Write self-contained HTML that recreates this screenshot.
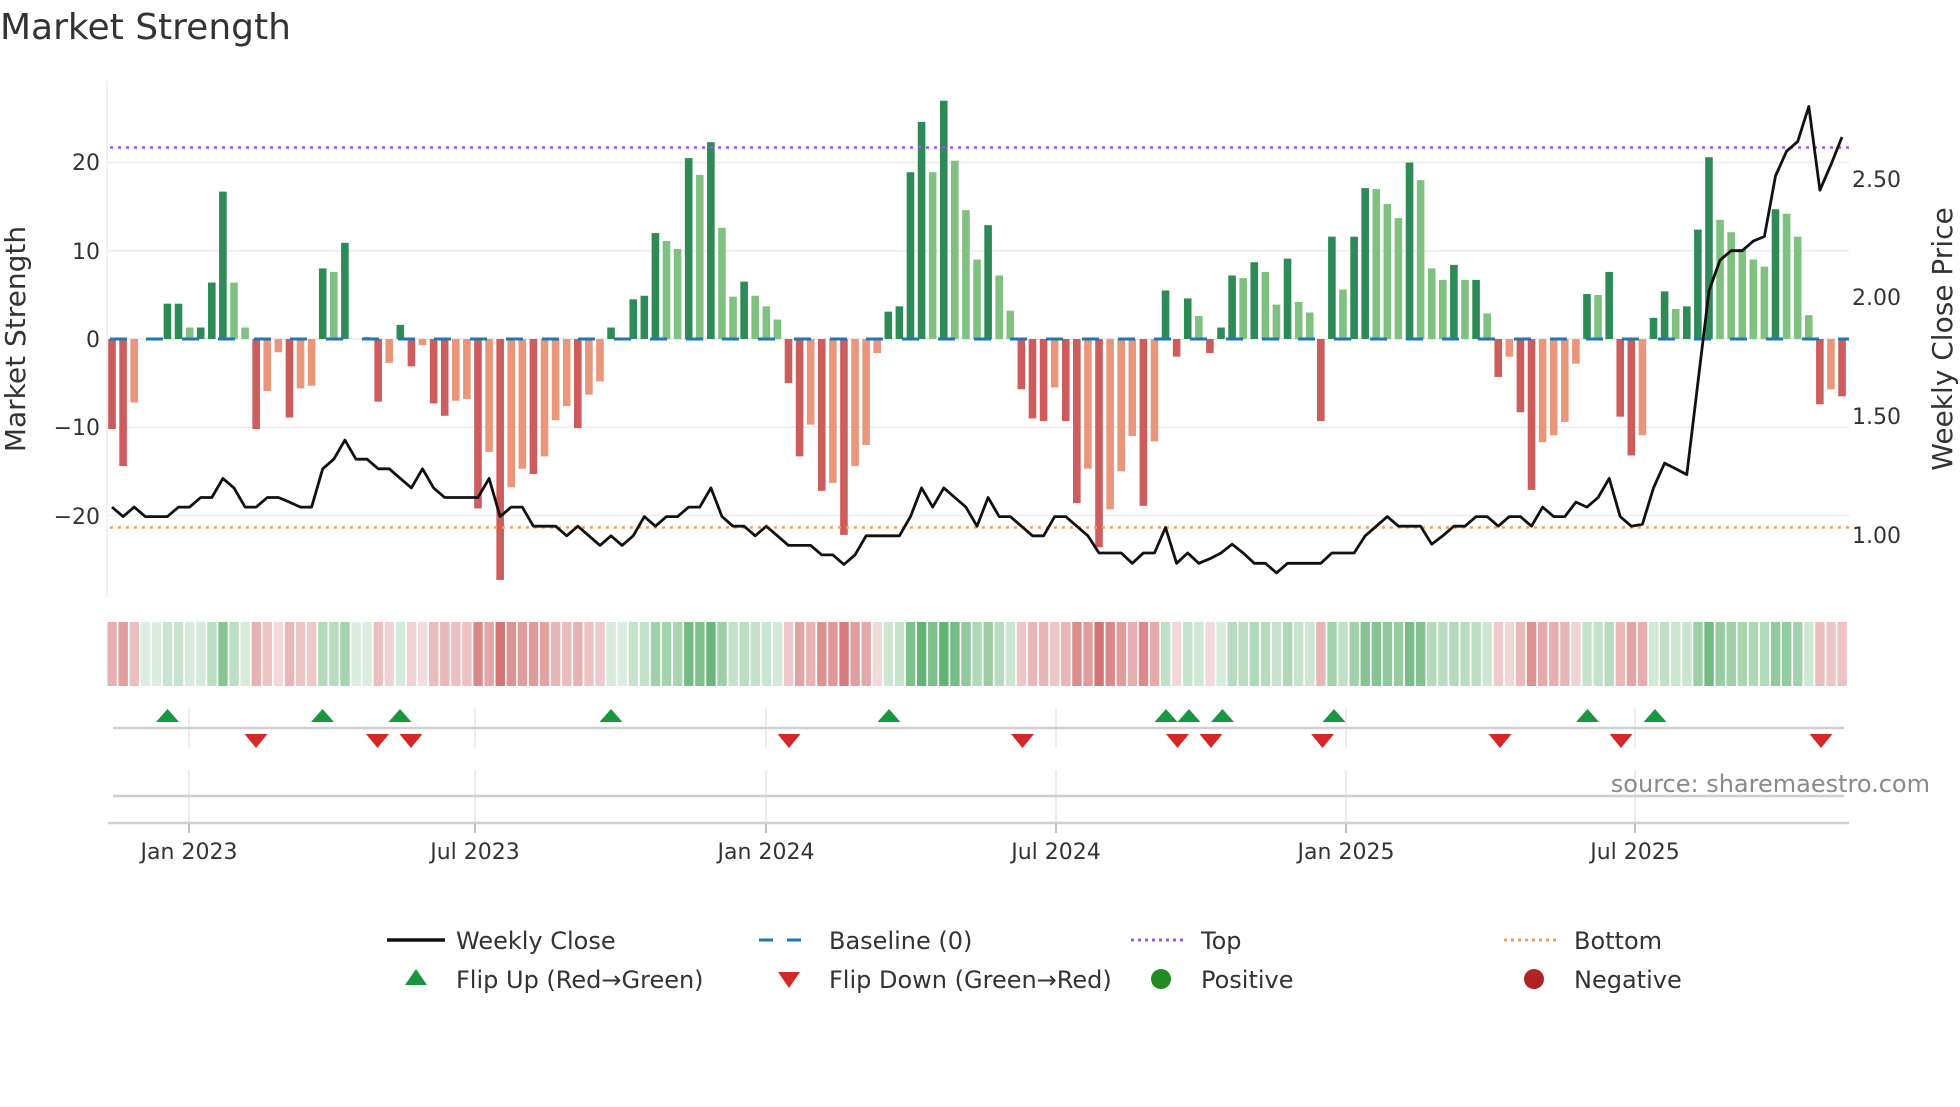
<!DOCTYPE html>
<html><head><meta charset="utf-8"><style>
html,body{margin:0;padding:0;background:#fff;}
body{width:1960px;height:1102px;overflow:hidden;}
svg text{font-family:"DejaVu Sans","Liberation Sans",sans-serif;}
</style></head><body>
<svg id="s" width="1960" height="1102" viewBox="0 0 1960 1102" xmlns="http://www.w3.org/2000/svg">
<text x="0" y="39" font-size="36" fill="#333">Market Strength</text>
<g id="grid" stroke="#ececec" stroke-width="1.5"></g>
<line x1="107" y1="81" x2="107" y2="598" stroke="#eee" stroke-width="1.5"/>
<g id="bars"></g>
<line x1="110" y1="147.5" x2="1849" y2="147.5" stroke="#9b59e0" stroke-width="2.5" stroke-dasharray="3,5"/>
<line x1="110" y1="527.5" x2="1849" y2="527.5" stroke="#f0a060" stroke-width="2.5" stroke-dasharray="3,5"/>
<line x1="110" y1="339" x2="1849" y2="339" stroke="#1f77b4" stroke-width="3" stroke-dasharray="17,19"/>
<polyline id="price" fill="none" stroke="#111" stroke-width="2.8" stroke-linejoin="round"/>
<g font-size="22" fill="#333" text-anchor="end">
<text x="100" y="170">20</text><text x="100" y="259">10</text><text x="100" y="347">0</text>
<text x="100" y="435">−10</text><text x="100" y="524">−20</text>
</g>
<g font-size="22" fill="#333">
<text x="1852" y="187">2.50</text><text x="1852" y="305">2.00</text><text x="1852" y="424">1.50</text><text x="1852" y="543">1.00</text>
</g>
<text transform="translate(25,339) rotate(-90)" font-size="28" fill="#333" text-anchor="middle">Market Strength</text>
<text transform="translate(1952,339) rotate(-90)" font-size="28" fill="#333" text-anchor="middle">Weekly Close Price</text>
<g id="heat"></g>
<g id="vg" stroke="#e4e7ec" stroke-width="1.5"></g>
<line x1="113" y1="728" x2="1844" y2="728" stroke="#cfcfcf" stroke-width="2.5"/>
<line x1="113" y1="796" x2="1844" y2="796" stroke="#cfcfcf" stroke-width="2.5"/>
<line x1="108" y1="823" x2="1849" y2="823" stroke="#cfcfcf" stroke-width="2.5"/>
<g id="flips"></g>
<g font-size="22" fill="#333" text-anchor="middle">
<text x="189" y="859">Jan 2023</text><text x="475" y="859">Jul 2023</text><text x="766" y="859">Jan 2024</text>
<text x="1056" y="859">Jul 2024</text><text x="1346" y="859">Jan 2025</text><text x="1635" y="859">Jul 2025</text>
</g>
<text x="1930" y="792" font-size="24" fill="#8a8a8a" text-anchor="end">source: sharemaestro.com</text>
<g font-size="24" fill="#333">
<line x1="387" y1="940" x2="445" y2="940" stroke="#111" stroke-width="3.5"/>
<text x="456" y="949">Weekly Close</text>
<line x1="759" y1="940" x2="815" y2="940" stroke="#1f77b4" stroke-width="3" stroke-dasharray="14,14"/>
<text x="829" y="949">Baseline (0)</text>
<line x1="1131" y1="940" x2="1185" y2="940" stroke="#9b59e0" stroke-width="3" stroke-dasharray="3,4"/>
<text x="1201" y="949">Top</text>
<line x1="1504" y1="940" x2="1559" y2="940" stroke="#f0a060" stroke-width="3" stroke-dasharray="3,4"/>
<text x="1574" y="949">Bottom</text>
<polygon points="416,969 405,985 427,985" fill="#1a9641"/>
<text x="456" y="988">Flip Up (Red→Green)</text>
<polygon points="778,972 800,972 789,988" fill="#d62728"/>
<text x="829" y="988">Flip Down (Green→Red)</text>
<circle cx="1161" cy="979" r="10" fill="#228b22"/>
<text x="1201" y="988">Positive</text>
<circle cx="1534" cy="979" r="10" fill="#b22222"/>
<text x="1574" y="988">Negative</text>
</g>
</svg>
<script>
var NS="http://www.w3.org/2000/svg";
function el(p,t,a){var e=document.createElementNS(NS,t);for(var k in a)e.setAttribute(k,a[k]);p.appendChild(e);return e;}
var v=[-10.2,-14.4,-7.2,0,0,4,4,1.3,1.3,6.4,16.7,6.4,1.3,-10.2,-5.9,-1.5,-8.9,-5.6,-5.3,8,7.6,10.9,0,0.2,-7.1,-2.7,1.6,-3.1,-0.7,-7.3,-8.7,-7,-6.8,-19.2,-12.8,-27.3,-16.8,-14.7,-15.3,-13.3,-9.2,-7.6,-10.1,-6.3,-4.8,1.3,0.1,4.5,4.9,12,11.1,10.2,20.5,18.6,22.3,12.6,4.8,6.5,4.9,3.7,2.2,-5,-13.3,-9.7,-17.2,-16.3,-22.2,-14.4,-12,-1.6,3.1,3.7,18.9,24.6,18.9,27,20.2,14.6,9,12.9,7.2,3.2,-5.7,-9,-9.3,-5.5,-9.3,-18.6,-14.7,-23.6,-19.3,-15,-11,-18.9,-11.6,5.5,-2,4.6,2.6,-1.6,1.3,7.2,6.9,8.7,7.6,3.9,9.1,4.2,3,-9.3,11.6,5.6,11.6,17.1,17,15.3,13.7,20,18,8,6.7,8.4,6.7,6.7,2.9,-4.3,-2,-8.3,-17.1,-11.7,-10.9,-9.4,-2.8,5.1,5,7.6,-8.8,-13.2,-10.9,2.4,5.4,3.4,3.7,12.4,20.6,13.5,12.1,10.2,9,8.2,14.7,14.2,11.6,2.7,-7.4,-5.7,-6.5];
var py=[1325,1350,1325,1350,1350,1350,1325,1325,1300,1300,1250,1275,1325,1325,1300,1300,1312,1325,1325,1225,1200,1150,1200,1200,1225,1225,1250,1275,1225,1275,1300,1300,1300,1300,1250,1350,1325,1325,1375,1375,1375,1400,1375,1400,1425,1400,1425,1400,1350,1375,1350,1350,1325,1325,1275,1350,1375,1375,1400,1375,1400,1425,1425,1425,1450,1450,1475,1450,1400,1400,1400,1400,1350,1275,1325,1275,1300,1325,1375,1300,1350,1350,1375,1400,1400,1350,1350,1375,1400,1445,1445,1445,1472,1445,1445,1378,1472,1445,1472,1460,1445,1422,1445,1472,1472,1497,1472,1472,1472,1472,1445,1445,1445,1400,1375,1350,1375,1375,1375,1422,1400,1375,1375,1350,1350,1375,1350,1350,1375,1325,1350,1350,1312,1325,1300,1250,1350,1375,1370,1275,1210,1225,1240,1000,760,680,655,655,630,618,460,395,370,278,497,430,358];
var s=document.getElementById('s');
var grid=document.getElementById('grid');
[162.5,250.8,339,427.3,515.5].forEach(function(y){el(grid,'line',{x1:107,x2:1849,y1:y,y2:y});});
var bars=document.getElementById('bars'),heat=document.getElementById('heat');
var pts=[];
for(var i=0;i<v.length;i++){
 var x=112+11.09*i, val=v[i], prev=i?v[i-1]:0, c;
 if(val>=0){c=(val>=prev)?'#2e8b57':'#80c080';}else{c=(val<=prev)?'#cd5c5c':'#e9967a';}
 var h=Math.abs(val)*8.825, y=val>=0?339-h:339;
 if(h>0.3) el(bars,'rect',{x:x-3.8,y:y,width:7.6,height:h,fill:c});
 var a=0.18+0.62*Math.min(Math.abs(val)/24,1);
 var hc=val>=0?'rgba(60,160,80,'+a+')':'rgba(200,80,80,'+a+')';
 el(heat,'rect',{x:x-4.6,y:622,width:9.4,height:64,fill:hc});
 pts.push(x.toFixed(1)+','+(py[i]/2.613).toFixed(1));
}
document.getElementById('price').setAttribute('points',pts.join(' '));
var vg=document.getElementById('vg');
[189,475,766,1056,1346,1635].forEach(function(x){el(vg,'line',{x1:x,x2:x,y1:708,y2:748});el(vg,'line',{x1:x,x2:x,y1:770,y2:823});el(vg,'line',{x1:x,x2:x,y1:823,y2:833,stroke:'#aaa'});});
var fl=document.getElementById('flips');
[167.5,322.5,400,611,889,1166,1189,1222.5,1334,1587.5,1655].forEach(function(x){el(fl,'polygon',{points:x+',709 '+(x-11.5)+',722 '+(x+11.5)+',722',fill:'#1a9641'});});
[256,377.5,411,789,1022.5,1177.5,1211,1322.5,1500,1621,1821].forEach(function(x){el(fl,'polygon',{points:(x-11.5)+',734 '+(x+11.5)+',734 '+x+',748',fill:'#d62728'});});
</script>
</body></html>
